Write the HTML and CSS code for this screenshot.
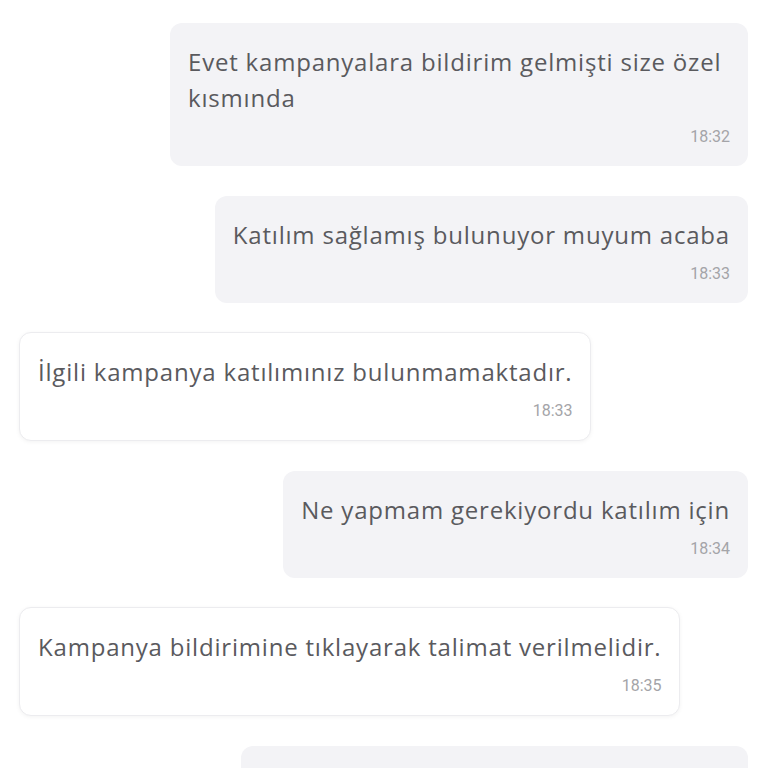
FILE: index.html
```html
<!DOCTYPE html>
<html lang="tr">
<head>
  <meta charset="UTF-8" />
  <meta name="viewport" content="width=device-width, initial-scale=1.0"/>
  <title>Mesajlar</title>
  <link rel="stylesheet" href="styles.css">
</head>
<body>

  <!-- Chat thread -->
  <div class="chat">

    <div class="msg out">
      <p>Evet kampanyalara bildirim gelmişti size özel kısmında</p>
      <span class="time">18:32</span>
    </div>

    <div class="msg out">
      <p>Katılım sağlamış bulunuyor muyum acaba</p>
      <span class="time">18:33</span>
    </div>

    <div class="msg in">
      <p>İlgili kampanya katılımınız bulunmamaktadır.</p>
      <span class="time">18:33</span>
    </div>

    <div class="msg out">
      <p>Ne yapmam gerekiyordu katılım için</p>
      <span class="time">18:34</span>
    </div>

    <div class="msg in">
      <p>Kampanya bildirimine tıklayarak talimat verilmelidir.</p>
      <span class="time">18:35</span>
    </div>

    <div class="msg out">
      <p>Peki, bildirime tıklamam yeterli olur mu</p>
      <span class="time">18:36</span>
    </div>

  </div>

</body>
</html>
```

FILE: styles.css
```css
* {
  margin: 0;
  padding: 0;
  box-sizing: border-box;
}

body {
  font-family: 'Open Sans', 'Noto Sans', sans-serif;
  background-color: #fff;
  color: #5a5a5e;
  overflow: hidden;
}

.chat {
  display: flex;
  flex-direction: column;
  gap: 29.5px;
  padding: 23px 20px 0 19px;
}

.msg {
  padding: 21px 18px 19px 18px;
  border-radius: 12px;
  display: flex;
  flex-direction: column;
}

.msg p {
  font-size: 24px;
  line-height: 36px;
  letter-spacing: 0.8px;
}

.msg .time {
  align-self: flex-end;
  font-family: Roboto, sans-serif;
  font-size: 16px;
  line-height: 20px;
  color: #a4a4a8;
  margin-top: 11px;
}

/* outgoing */
.out {
  align-self: flex-end;
  max-width: 578px;
  background-color: #f3f3f6;
}

/* incoming */
.in {
  align-self: flex-start;
  max-width: 680px;
  background-color: #fff;
  border: 1px solid #ececef;
  box-shadow: 0 1px 4px rgba(0, 0, 0, 0.05);
}
```
